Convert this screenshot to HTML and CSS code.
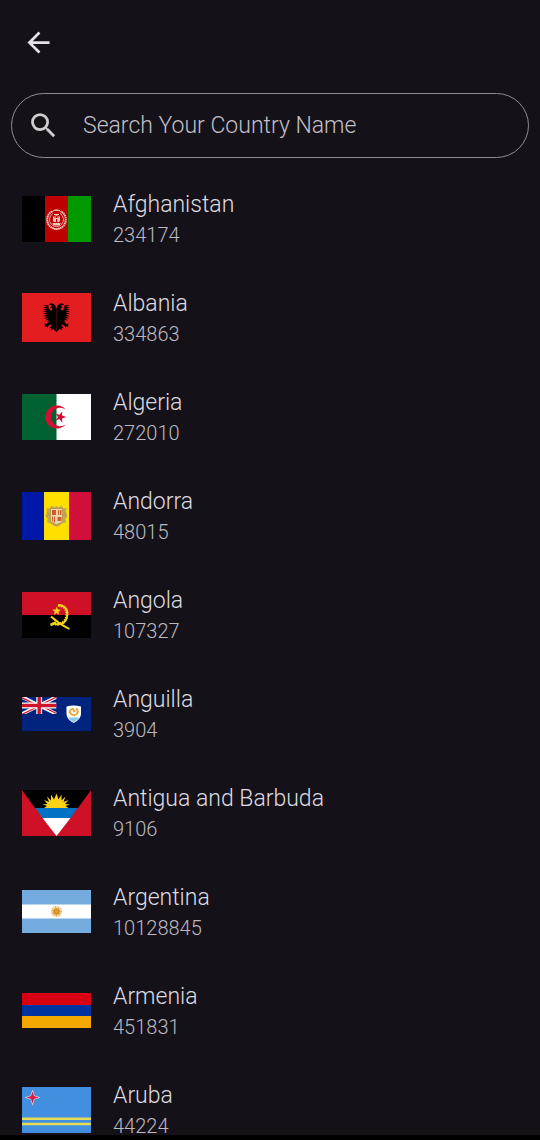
FILE: index.html
```html
<!DOCTYPE html>
<html lang="en">
<head>
<meta charset="utf-8">
<meta name="viewport" content="width=device-width, initial-scale=1">
<title>Countries</title>
<link rel="stylesheet" href="styles.css">
</head>
<body>
<div class="screen">
  <header class="app-bar">
    <button class="back" type="button" aria-label="Back">
      <svg class="icon" viewBox="0 0 24 24"><path d="M7.8 13l5.6 5.6L12 20l-8-8 8-8 1.4 1.4L7.8 11H20v2z"/></svg>
    </button>
  </header>
  <label class="search">
    <svg class="icon" viewBox="0 0 24 24" aria-hidden="true"><path d="M15.5 14h-.79l-.28-.27A6.47 6.47 0 0 0 16 9.5 6.5 6.5 0 1 0 9.5 16c1.61 0 3.09-.59 4.23-1.57l.27.28v.79l5 4.99L20.49 19l-4.99-5zm-6 0a4.5 4.5 0 1 1 0-9 4.5 4.5 0 0 1 0 9z"/></svg>
    <input class="search-input" type="text" placeholder="Search Your Country Name" aria-label="Search Your Country Name">
  </label>
  <ul class="countries">
    <li class="country">
      <svg class="flag" viewBox="0 0 69 46" aria-hidden="true"><path d="M0 0h23v46H0z"/><path fill="#be0000" d="M23 0h23v46H23z"/><path fill="#090" d="M46 0h23v46H46z"/>
        <g fill="none" stroke="#f0c8c2"><path stroke-width="2" stroke-dasharray="1.5 .5" d="M30 15.500a9.300 9.300 0 1 0 9 0"/><path stroke-width=".8" d="M31 17.500a7 7 0 1 0 7 0M29.500 16.500q5-6 10 0M31 14.500h7M30 32q4.500 3 9 0"/><path d="M30.500 27.500h8M31.500 25.500v-5M37.500 25.500v-5M33 20.500q1.500-3 3 0v5h-3zM32 18.500h5"/></g><path fill="#f0c8c2" d="M32 22h5v4h-5zM31 28h7v1.500h-7z"/><path fill="#be0000" d="M34 23h1.200v3H34z"/></svg>
      <div class="info"><span class="name">Afghanistan</span><span class="count">234174</span></div>
    </li>
    <li class="country">
      <svg class="flag" viewBox="0 0 69 49" aria-hidden="true"><defs><path id="eagle-half" d="M34.500 15.500l-1.300-3-1.800-1.800-2.400-.4-2.400 1.500 2.400.2 1.200 1.200-2.200 1.200 2.400.5-.6 2.600-1.600-.3-1.500-2-.4-3-5 .2 4 1.700-4.300.3 4.300 1.500-4.500.6 4.500 1.300-4.500.8 4.600 1-4.600 1.200 4.700.7-4.400 1.700 4.600.2-4 2.100 4.400-.3-3 2.400 3.800-.9-1.800 2.200 2.600-.8-3.200 2.800-2.600-.3 1.600 1.400-1.200 1.600 2.500-.2.400 1.600 1.500-2.600 2.800-1.100-.3 2-2 2 2-.3.300 2.400 1.500-1.600L34.500 39z"/></defs><path fill="#e41e20" d="M0 0h69v49H0z"/><use href="#eagle-half"/><use href="#eagle-half" transform="matrix(-1 0 0 1 69 0)"/></svg>
      <div class="info"><span class="name">Albania</span><span class="count">334863</span></div>
    </li>
    <li class="country">
      <svg class="flag" viewBox="0 0 69 46" aria-hidden="true"><path fill="#fff" d="M0 0h69v46H0z"/><path fill="#006233" d="M0 0h34.500v46H0z"/><path fill="#d21034" d="M43.600 15.500a11.500 11.500 0 1 0 0 15 9.200 9.200 0 1 1 0-15zM44.200 23l-4.100-1.400.1-4.300-2.600 3.400-4.100-1.300 2.500 3.600-2.500 3.600 4.100-1.300 2.600 3.400-.1-4.300z"/></svg>
      <div class="info"><span class="name">Algeria</span><span class="count">272010</span></div>
    </li>
    <li class="country">
      <svg class="flag" viewBox="0 0 69 48" aria-hidden="true"><path fill="#0018a8" d="M0 0h22v48H0z"/><path fill="#fedf00" d="M22 0h25v48H22z"/><path fill="#d0103a" d="M47 0h22v48H47z"/>
        <path fill="#c5a951" d="M34.500 14l2 1.500 3-2 2 3 3-.5-.5 4 1.500 4-2 3 .5 3.500-4 .8-2 2-3.500 1.500-3.500-1.500-2-2-4-.8.500-3.500-2-3 1.500-4-.5-4 3 .5 2-3 3 2z"/><path fill="#e9d7b0" d="M29 17h11v12.500l-5.500 2.500-5.500-2.500z"/><path fill="#d05a28" d="M30 18h4v5h-4zM36 18h1v5h-1zM38 18h1.300v5H38zM30 24.500h1v5h-1zM32 24.500h1v6h-1zM35.500 25h4v4h-4z"/><path fill="none" stroke="#b0924c" stroke-width=".7" d="M28.500 16.500h12v14l-6 3-6-3zM25 20l2 2-2 3M44 20l-2 2 2 3"/></svg>
      <div class="info"><span class="name">Andorra</span><span class="count">48015</span></div>
    </li>
    <li class="country">
      <svg class="flag" viewBox="0 0 69 46" aria-hidden="true"><path d="M0 0h69v46H0z"/><path fill="#ce1126" d="M0 0h69v23H0z"/>
        <g fill="none" stroke="#f9d616"><path stroke-width="2" d="M36 13c7 0 10 5 9.200 10.500-.7 7-6 9.800-12.200 8.500"/><path stroke-width="3" stroke-dasharray="1.500 1.300" d="M36 13.500c7 0 9.500 5 8.700 10-.7 7-6 9.300-11.700 8.500"/><path stroke-width="1.800" d="M29 24.500Q37 32 47.500 37"/><path stroke-width="2.500" d="M34 30.500l-5.500 2.500"/></g><path fill="#f9d616" d="M34.800 14.500l1 3 3.200.3-2.600 1.900.8 3.100-2.600-1.700-2.700 1.700.9-3.100-2.500-2 3.200-.2z"/></svg>
      <div class="info"><span class="name">Angola</span><span class="count">107327</span></div>
    </li>
    <li class="country">
      <svg class="flag" viewBox="0 0 69 34" aria-hidden="true"><path fill="#00247d" d="M0 0h69v34H0z"/><path stroke="#fff" stroke-width="3.600" d="M0 0l34.500 17M34.500 0L0 17"/><path stroke="#cf142b" stroke-width="1.300" d="M0 .7l17 8.500M34.500 0L17.300 8.500M34.500 16.500L17.300 8M0 17.500L17 9"/><path stroke="#fff" stroke-width="5.800" d="M17.200 0v17M0 8.500h34.500"/><path stroke="#cf142b" stroke-width="3.400" d="M17.200 0v17M0 8.500h34.500"/><path fill="#00247d" d="M34.500 0H40v20H0v-3h34.500z"/>
        <path fill="#fff" d="M44.500 9.500q7-2 14.500 0v7c0 5-4 7.500-7.300 9.500-3.400-2-7.200-4.500-7.200-9.500z"/><path fill="#8cc9e8" d="M46 20.500h11.500q-2 3-5.800 5-3.700-2-5.700-5z"/><path fill="none" stroke="#e9a83c" stroke-width="2" d="M47.500 16c0-3 2-4.500 4.500-4M54 11.500c3 2 2 5-.5 6.500M48 15.500q2 3.500 5 2.500M51 14.500l2.500-1"/></svg>
      <div class="info"><span class="name">Anguilla</span><span class="count">3904</span></div>
    </li>
    <li class="country">
      <svg class="flag" viewBox="0 0 69 46" aria-hidden="true"><path fill="#ce1126" d="M0 0h69v46H0z"/><path d="M0 0h69L56 18H13z"/><path fill="#fcd116" d="M22 18l3-2-4.500-1.500 5-.5-3.500-4 5 2-2-5.500 4 4 0-6 3 5L34.500 3.500 36.500 9.500l3-5 0 6 4-4-2 5.500 5-2-3.500 4 5 .5L43.500 16l3 2z"/><path fill="#0072c6" d="M13.500 18h42l-7 10h-28z"/><path fill="#fff" d="M20.500 28h28l-14 18z"/></svg>
      <div class="info"><span class="name">Antigua and Barbuda</span><span class="count">9106</span></div>
    </li>
    <li class="country">
      <svg class="flag" viewBox="0 0 69 43" aria-hidden="true"><path fill="#74acdf" d="M0 0h69v43H0z"/><path fill="#fff" d="M0 14.500h69v14H0z"/><circle cx="34.500" cy="21.500" r="4.500" fill="none" stroke="#e8b14c" stroke-width="2" stroke-dasharray="1 .6"/><circle cx="34.500" cy="21.500" r="3.600" fill="#e2a02f"/><circle cx="34.500" cy="21.500" r="2.300" fill="none" stroke="#c5822a" stroke-width=".7"/></svg>
      <div class="info"><span class="name">Argentina</span><span class="count">10128845</span></div>
    </li>
    <li class="country">
      <svg class="flag" viewBox="0 0 69 35" aria-hidden="true"><path fill="#d90012" d="M0 0h69v12H0z"/><path fill="#0033a0" d="M0 12h69v11H0z"/><path fill="#f2a800" d="M0 23h69v12H0z"/></svg>
      <div class="info"><span class="name">Armenia</span><span class="count">451831</span></div>
    </li>
    <li class="country">
      <svg class="flag" viewBox="0 0 69 46" aria-hidden="true"><path fill="#418fde" d="M0 0h69v46H0z"/><path fill="#e6dc58" d="M0 30.500h69V33H0zM0 35.800h69v2.500H0z"/><path fill="#e8d4e4" d="M10.500 2.500l2 6 6 2-6 2-2 6-2-6-6-2 6-2z"/><path fill="#d81e3c" d="M10.500 4.500l1.500 4.500 4.500 1.500L12 12l-1.500 4.500L9 12l-4.500-1.500L9 9z"/></svg>
      <div class="info"><span class="name">Aruba</span><span class="count">44224</span></div>
    </li>
  </ul>
  <div class="system-bar"></div>
</div>
</body>
</html>
```
FILE: styles.css
```css
* {
  box-sizing: border-box;
}

body {
  margin: 0;
  background: #141218;
  color: #dedbe1;
  font-family: Roboto, "Liberation Sans", sans-serif;
  font-weight: 300;
}

.screen {
  display: flex;
  flex-direction: column;
  height: 100vh;
}

.app-bar {
  display: flex;
  flex: none;
  padding: 16px 12px 18px;
}

.back {
  display: flex;
  padding: 10px;
  border: 0;
  background: none;
  color: #e6e0e9;
}

.icon {
  display: block;
  flex: none;
  width: 33px;
  height: 33px;
  fill: currentColor;
}

.search {
  display: flex;
  flex: none;
  align-items: center;
  gap: 23px;
  margin: 6px 11px 11px;
  padding: 15px;
  border: 1px solid #8e8b92;
  border-radius: 33px;
  color: #cfccd2;
}

.search-input {
  flex: 1;
  min-width: 0;
  height: 32px;
  padding: 0;
  border: 0;
  outline: 0;
  background: none;
  color: inherit;
  font: inherit;
  font-size: 23px;
}

.search-input::placeholder {
  color: #c2bfc6;
  opacity: 1;
}

.countries {
  flex: 1;
  min-height: 0;
  margin: 0;
  padding: 0;
  overflow: hidden;
  list-style: none;
}

.country {
  display: flex;
  align-items: center;
  gap: 22px;
  padding: 24px 22px;
}

.flag {
  display: block;
  flex: none;
  width: 69px;
}

.info {
  display: flex;
  flex-direction: column;
  gap: 10px;
}

.name {
  font-size: 23px;
  line-height: 23px;
}

.count {
  color: #bcb9c0;
  font-size: 20px;
  line-height: 18px;
}

.system-bar {
  flex: none;
  height: 5px;
  background: #000;
}
```
